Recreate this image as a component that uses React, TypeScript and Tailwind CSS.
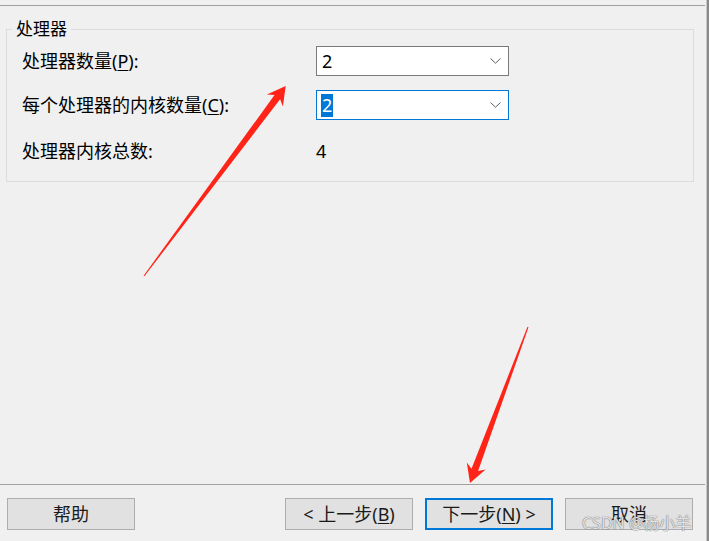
const font = { fontFamily: '"Noto Sans", "Noto Sans CJK SC", sans-serif' };

const Chevron = () => (
  <svg width="11" height="6" viewBox="0 0 11 6" className="shrink-0">
    <path d="M0.5 0.5 L5.5 5.2 L10.5 0.5" fill="none" stroke="#606060" strokeWidth="1" />
  </svg>
);

const Combo = ({ value, focused }: { value: string; focused?: boolean }) => (
  <div
    className={`w-[193px] h-[30px] bg-white border flex items-center justify-between pl-[4px] pr-[7px] ${
      focused ? 'border-[#0078d7]' : 'border-[#7a7a7a]'
    }`}
  >
    <span className={`text-[18px] leading-[23px] px-px ${focused ? 'bg-[#0078d7] text-white' : 'text-black'}`}>
      {value}
    </span>
    <Chevron />
  </div>
);

const Btn = ({ children, primary }: { children: React.ReactNode; primary?: boolean }) => (
  <div
    className={`w-[128px] h-[32px] bg-[#e1e1e1] flex items-center justify-center text-[18px] text-[#1a1a1a] ${
      primary ? 'border-2 border-[#0078d7]' : 'border border-[#adadad]'
    }`}
  >
    {children}
  </div>
);

const Arrows = () => (
  <svg className="absolute inset-0 pointer-events-none" width="709" height="541" viewBox="0 0 709 541">
    <polygon
      fill="#ff2418"
      points="143.6,275.7 274.5,95.1 266.9,94.4 285.7,86 282.9,106.4 280.1,99.3 144.4,276.3"
    />
    <polygon
      fill="#ff2418"
      points="527.5,326.8 471.5,468.7 466.8,462.6 470,483 485.6,469.6 478.1,471.1 528.5,327.2"
    />
  </svg>
);

export default function App() {
  return (
    <div className="relative w-[709px] h-[541px] bg-[#f0f0f0] flex text-black" style={font}>
      <div className="w-[706px] flex flex-col">
        <div className="mt-[5px] h-px w-[705px] bg-[#a0a0a0]" />

        <fieldset className="mx-[6px] mt-[11px] border border-[#dcdcdc] p-0 pb-[15px] w-[688px]">
          <legend className="ml-[5px] px-[4px] text-[17px] leading-[24px]">处理器</legend>

          <div className="pl-[15px]">
            <div className="flex items-center h-[30px] mt-[5px]">
              <span className="w-[294px] text-[18px]">
                处理器数量(<span className="underline underline-offset-2">P</span>):
              </span>
              <Combo value="2" />
            </div>

            <div className="flex items-center h-[30px] mt-[14px]">
              <span className="w-[294px] text-[18px]">
                每个处理器的内核数量(<span className="underline underline-offset-2">C</span>):
              </span>
              <Combo value="2" focused />
            </div>

            <div className="flex items-center h-[30px] mt-[16px]">
              <span className="w-[294px] text-[18px]">处理器内核总数:</span>
              <span className="text-[18px]">4</span>
            </div>
          </div>
        </fieldset>

        <div className="flex-1" />

        <div className="h-px w-[705px] bg-[#a0a0a0]" />

        <div className="flex mt-[13px] mb-[11px] pl-[7px] pr-[13px]">
          <Btn>帮助</Btn>
          <div className="flex-1" />
          <div className="flex gap-[12px]">
            <Btn>
              &lt; 上一步(<span className="underline underline-offset-2">B</span>)
            </Btn>
            <Btn primary>
              下一步(<span className="underline underline-offset-2">N</span>) &gt;
            </Btn>
            <Btn>取消</Btn>
          </div>
        </div>
      </div>

      <div className="w-[3px] border-l border-[#c8c8c8] bg-[#8a8a8a]" />

      <Arrows />

      <span className="absolute left-[582px] top-[511px] text-[16px] text-white/80 [text-shadow:0_0_1px_#6e6e6e,0_0_1px_#6e6e6e]">
        CSDN @杨小羊
      </span>
    </div>
  );
}
